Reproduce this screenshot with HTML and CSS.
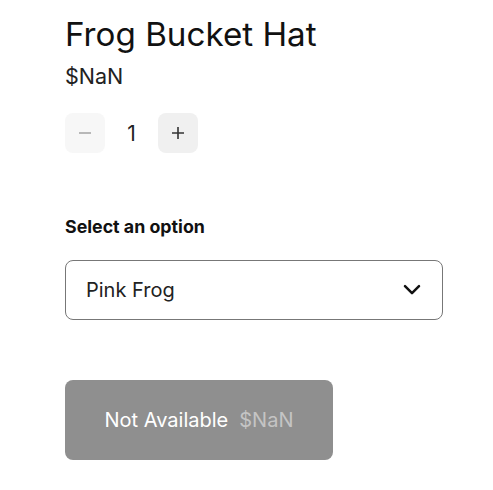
FILE: index.html
```html
<!DOCTYPE html>
<html>
<head>
<meta charset="utf-8">
<link rel="stylesheet" href="styles.css">
</head>
<body>
<main class="product">
  <h1 class="title">Frog Bucket Hat</h1>
  <div class="price">$NaN</div>
  <div class="qty">
    <button class="qty-btn qty-btn--disabled" aria-label="Decrease">
      <svg width="14" height="14" viewBox="0 0 14 14"><path d="M1 7h12" stroke="currentColor" stroke-width="1.6" fill="none"/></svg>
    </button>
    <span class="qty-value">1</span>
    <button class="qty-btn" aria-label="Increase">
      <svg width="14" height="14" viewBox="0 0 14 14"><path d="M1 7h12M7 1v12" stroke="currentColor" stroke-width="1.6" fill="none"/></svg>
    </button>
  </div>
  <div class="option-label">Select an option</div>
  <div class="select">
    <span>Pink Frog</span>
    <svg class="chevron" width="18" height="12" viewBox="0 0 18 12"><path d="M2 2.2l7 7 7-7" stroke="#111" stroke-width="2.5" fill="none" stroke-linecap="round" stroke-linejoin="round"/></svg>
  </div>
  <button class="add">
    <span>Not Available</span>
    <span class="add-price">$NaN</span>
  </button>
</main>
</body>
</html>
```
FILE: styles.css
```css
html, body {
  margin: 0;
  padding: 0;
  background: #fff;
}
body {
  font-family: Inter, "Noto Sans", sans-serif;
  color: #111;
}
.product {
  padding: 13px 0 0 65px;
  width: 378px;
}
.title {
  margin: 0;
  font-size: 33.2px;
  font-weight: 400;
  line-height: 42px;
}
.price {
  font-size: 21.5px;
  line-height: 26px;
  margin-top: 8px;
  color: #222;
}
.qty {
  display: flex;
  align-items: center;
  margin-top: 24px;
  height: 40px;
}
.qty-btn {
  width: 40px;
  height: 40px;
  border: none;
  border-radius: 8px;
  background: #f0f0f0;
  color: #333;
  display: flex;
  align-items: center;
  justify-content: center;
  padding: 0;
}
.qty-btn--disabled {
  background: #f7f7f7;
  color: #a8a8a8;
}
.qty-value {
  width: 53px;
  text-align: center;
  font-size: 21px;
  color: #222;
}
.option-label {
  margin-top: 63px;
  font-size: 17.8px;
  font-weight: 700;
  line-height: 22px;
}
.select {
  margin-top: 22px;
  height: 58px;
  border: 1px solid #777;
  border-radius: 8px;
  display: flex;
  align-items: center;
  justify-content: space-between;
  padding: 0 21px 0 20px;
  font-size: 20px;
  color: #222;
}
.chevron {
  display: block;
}
.add {
  margin-top: 60px;
  width: 268px;
  height: 80px;
  border: none;
  border-radius: 8px;
  background: #8f8f8f;
  color: #fff;
  font-family: Inter, "Noto Sans", sans-serif;
  font-size: 20px;
  display: flex;
  align-items: center;
  justify-content: center;
  gap: 11px;
  padding: 0;
}
.add-price {
  color: #c4c4c4;
}
```
